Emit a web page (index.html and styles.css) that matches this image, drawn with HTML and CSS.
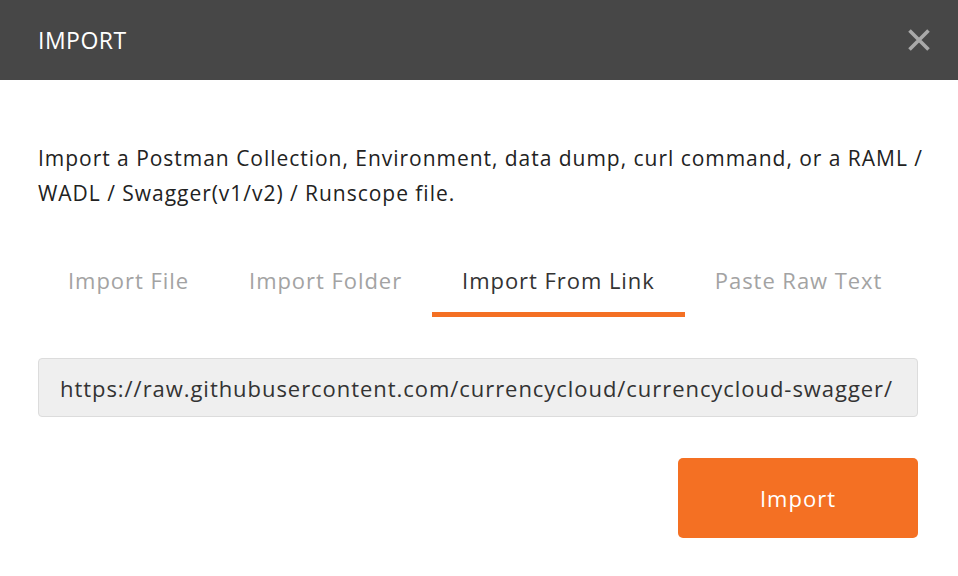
FILE: index.html
```html
<!DOCTYPE html>
<html>
<head>
<meta charset="utf-8">
<link rel="stylesheet" href="styles.css">
</head>
<body>
<div class="modal">
  <header class="modal-header">
    <h1 class="modal-title">IMPORT</h1>
    <button class="close" aria-label="Close">
      <svg width="24" height="24" viewBox="0 0 24 24"><path d="M2.5 2.5 L21.5 21.5 M21.5 2.5 L2.5 21.5" stroke="#a9a9a9" stroke-width="3.6" stroke-linecap="butt"/></svg>
    </button>
  </header>
  <main class="modal-body">
    <p class="desc">Import a Postman Collection, Environment, data dump, curl command, or a RAML / WADL / Swagger(v1/v2) / Runscope file.</p>
    <nav class="tabs">
      <div class="tab">Import File</div>
      <div class="tab">Import Folder</div>
      <div class="tab active">Import From Link</div>
      <div class="tab">Paste Raw Text</div>
    </nav>
    <div class="url-input">https://raw.githubusercontent.com/currencycloud/currencycloud-swagger/</div>
    <div class="actions">
      <button class="btn-import">Import</button>
    </div>
  </main>
</div>
</body>
</html>
```

FILE: styles.css
```css
* { box-sizing: border-box; }
html, body {
  margin: 0;
  padding: 0;
  background: #ffffff;
  font-family: "Open Sans", "Liberation Sans", sans-serif;
}
.modal {
  width: 958px;
  height: 576px;
  display: flex;
  flex-direction: column;
}
.modal-header {
  height: 80px;
  background: #474747;
  display: flex;
  align-items: center;
  justify-content: space-between;
  padding: 0 27px 0 38px;
}
.modal-title {
  margin: 0;
  color: #ffffff;
  font-size: 23px;
  font-weight: 400;
  letter-spacing: 0.5px;
}
.close {
  border: 0;
  background: transparent;
  padding: 0;
  width: 24px;
  height: 24px;
  display: flex;
}
.modal-body {
  padding: 61px 40px 0 38px;
  display: flex;
  flex-direction: column;
}
.desc {
  margin: 0 -14px 0 0;
  font-size: 21px;
  line-height: 35px;
  letter-spacing: 0.97px;
  color: #222222;
}
.tabs {
  display: flex;
  margin-top: 54px;
}
.tab {
  padding: 0 30px 0;
  font-size: 22px;
  letter-spacing: 0.95px;
  line-height: 30px;
  height: 52px;
  color: #a3a3a3;
  border-bottom: 5px solid transparent;
  white-space: nowrap;
}
.tab.active {
  color: #333333;
  border-bottom-color: #f47023;
}
.url-input {
  margin-top: 41px;
  height: 59px;
  background: #efefef;
  border: 1px solid #dcdcdc;
  border-radius: 4px;
  padding: 0 21px;
  display: flex;
  align-items: center;
  font-size: 22px;
  letter-spacing: 0.95px;
  color: #333333;
  white-space: nowrap;
  overflow: hidden;
}
.actions {
  display: flex;
  justify-content: flex-end;
  margin-top: 41px;
}
.btn-import {
  width: 240px;
  height: 80px;
  background: #f47023;
  border: 0;
  border-radius: 5px;
  color: #ffffff;
  font-family: "Open Sans", "Liberation Sans", sans-serif;
  font-size: 22px;
  letter-spacing: 1px;
}
```
